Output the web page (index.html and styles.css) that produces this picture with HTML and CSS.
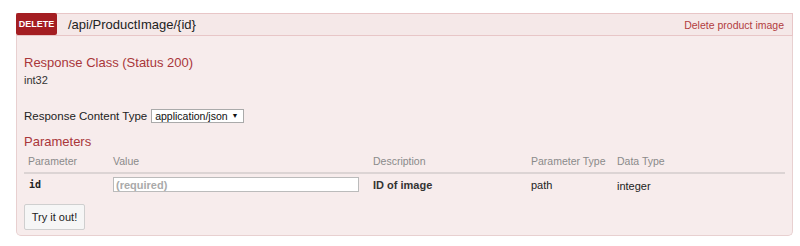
FILE: index.html
```html
<!DOCTYPE html>
<html>
<head>
<meta charset="utf-8">
<link rel="stylesheet" href="styles.css">
</head>
<body>
<div class="op">
  <div class="heading">
    <span class="method">DELETE</span>
    <span class="path">/api/ProductImage/{id}</span>
    <span class="summary">Delete product image</span>
  </div>
  <div class="content">
    <h4 class="title first">Response Class (Status 200)</h4>
    <div class="model">int32</div>
    <div class="ctype">
      <span>Response Content Type</span>
      <span class="select">application/json <span class="arrow">▼</span></span>
    </div>
    <h4 class="title params">Parameters</h4>
    <table class="ptable">
      <colgroup>
        <col class="c1"><col class="c2"><col class="c3"><col class="c4"><col>
      </colgroup>
      <thead>
        <tr><th>Parameter</th><th>Value</th><th>Description</th><th>Parameter Type</th><th>Data Type</th></tr>
      </thead>
      <tbody>
        <tr>
          <td class="pname">id</td>
          <td><input class="pinput" placeholder="(required)"></td>
          <td class="desc">ID of image</td>
          <td>path</td>
          <td class="dtype">integer</td>
        </tr>
      </tbody>
    </table>
    <button class="try">Try it out!</button>
  </div>
</div>
</body>
</html>
```

FILE: styles.css
```css
html, body {
  margin: 0;
  padding: 0;
  background: #ffffff;
}
body {
  padding: 13px 7px 0 16px;
  font-family: "Liberation Sans", Arial, sans-serif;
  color: #333;
}
.op {
  width: 777px;
}
.heading {
  display: flex;
  align-items: center;
  background: #f5e8e8;
  border: 1px solid #e8c6c7;
  border-left: none;
  box-sizing: border-box;
  height: 23px;
}
.method {
  display: flex;
  align-items: center;
  justify-content: center;
  width: 41px;
  height: 22px;
  margin-top: -1px;
  background: #a41e22;
  color: #fff;
  font-size: 9px;
  font-weight: bold;
  border-radius: 2px;
}
.path {
  margin-left: 11px;
  font-size: 13px;
  color: #222;
}
.summary {
  margin-left: auto;
  margin-right: 8px;
  font-size: 10.5px;
  color: #b23c40;
}
.content {
  background: #f7ecec;
  border: 1px solid #e8d0d0;
  border-top: none;
  border-radius: 0 0 5px 5px;
  padding: 0 7px 6px 7px;
  height: 200px;
  box-sizing: border-box;
}
.title {
  margin: 0;
  font-weight: normal;
  font-size: 13px;
  line-height: 16px;
  color: #a9363a;
}
.first {
  padding-top: 19px;
}
.model {
  margin-top: 3px;
  font-size: 11px;
  line-height: 13px;
  color: #333;
}
.ctype {
  margin-top: 22px;
  display: flex;
  align-items: center;
  font-size: 11.5px;
  line-height: 14px;
  color: #222;
}
.select {
  margin-left: 4px;
  display: inline-flex;
  align-items: center;
  height: 14px;
  padding: 0 4px 0 3px;
  background: #fff;
  border: 1px solid #aaa;
  font-size: 10.5px;
  color: #111;
  box-sizing: border-box;
}
.arrow {
  margin-left: 4px;
  font-size: 7px;
}
.params {
  margin-top: 11px;
}
.ptable {
  margin-top: 2px;
  width: 761px;
  border-collapse: collapse;
  table-layout: fixed;
}
.c1 { width: 89px; }
.c2 { width: 260px; }
.c3 { width: 158px; }
.c4 { width: 86px; }
.ptable th {
  text-align: left;
  font-weight: normal;
  font-size: 10.5px;
  color: #8a8a8a;
  padding: 3px 0 4px 0;
  border-bottom: 2px solid #dcd4d4;
  line-height: 13px;
  white-space: nowrap;
}
.ptable th:first-child { padding-left: 4px; }
.ptable td {
  font-size: 11px;
  color: #222;
  padding: 2px 0 0 0;
  vertical-align: middle;
  line-height: 14px;
  white-space: nowrap;
}
.ptable td:first-child { padding-left: 5px; }
.pname {
  font-family: "DejaVu Sans Mono", monospace;
  font-weight: bold;
  font-size: 10px !important;
}
.desc {
  font-weight: bold;
  color: #333 !important;
}
.dtype {
  padding-top: 5px !important;
}
.pinput {
  display: block;
  width: 246px;
  height: 15px;
  box-sizing: border-box;
  border: 1px solid #bbb;
  background: #fff;
  padding: 0 2px;
  font-family: "Liberation Sans", Arial, sans-serif;
  font-size: 11px;
  font-weight: bold;
  outline: none;
}
.pinput::placeholder {
  color: #aaa;
}
.try {
  margin-top: 11px;
  display: block;
  width: 61px;
  height: 26px;
  background: #f6f6f6;
  border: 1px solid #cfcfcf;
  border-radius: 2px;
  font-family: "Liberation Sans", Arial, sans-serif;
  font-size: 11px;
  color: #222;
  padding: 0;
}
```
